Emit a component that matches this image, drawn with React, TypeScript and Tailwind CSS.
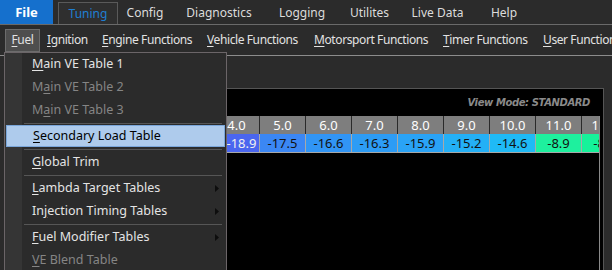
import React from "react";

type MenuItem = {
  pre: string;
  k: string;
  post: string;
  disabled?: boolean;
  sub?: boolean;
  active?: boolean;
};

const tabs = [
  { label: "Config", w: "w-[32px]", ml: "ml-[11px]" },
  { label: "Diagnostics", w: "w-[58px]", ml: "ml-[29px]" },
  { label: "Logging", w: "w-[42px]", ml: "ml-[33px]" },
  { label: "Utilites", w: "w-[35px]", ml: "ml-[29px]" },
  { label: "Live Data", w: "w-[45px]", ml: "ml-[28px]" },
  { label: "Help", w: "w-[22px]", ml: "ml-[33px]" },
];

const subMenus = [
  { k: "I", rest: "gnition", w: "w-[41px]", ml: "ml-[7px]" },
  { k: "E", rest: "ngine Functions", w: "w-[90px]", ml: "ml-[14px]" },
  { k: "V", rest: "ehicle Functions", w: "w-[92px]", ml: "ml-[15px]" },
  { k: "M", rest: "otorsport Functions", w: "w-[114px]", ml: "ml-[15px]" },
  { k: "T", rest: "imer Functions", w: "w-[86px]", ml: "ml-[15px]" },
  { k: "U", rest: "ser Functions", w: "w-[90px]", ml: "ml-[14px]" },
];

// rpm-ish columns, 4.0 sits half under the open menu
const columns = [
  { h: "4.0", v: "-18.9", bg: "bg-[#4a66ef]", light: true, shift: "pl-[10px]" },
  { h: "5.0", v: "-17.5", bg: "bg-[#3b87f4]" },
  { h: "6.0", v: "-16.6", bg: "bg-[#3195f5]" },
  { h: "7.0", v: "-16.3", bg: "bg-[#2d9cf5]" },
  { h: "8.0", v: "-15.9", bg: "bg-[#2aa3f6]" },
  { h: "9.0", v: "-15.2", bg: "bg-[#24b0f6]" },
  { h: "10.0", v: "-14.6", bg: "bg-[#1fbaf6]" },
  { h: "11.0", v: "-8.9", bg: "bg-[#1ef09e]" },
  { h: "12.0", v: "-8.1", bg: "bg-[#16f29a]" },
];

const Row = ({ item }: { item: MenuItem }) => {
  if (item.active) {
    return (
      <div className="mx-[1px] h-[22px] flex items-center pl-[26px] border border-[#7aa6da] bg-[#aecbec] text-black">
        {item.pre}
        <span className="underline underline-offset-2">{item.k}</span>
        {item.post}
      </div>
    );
  }
  return (
    <div
      className={`h-[23px] flex items-center pl-[27px] pr-[7px] ${
        item.disabled ? "text-[#858585]" : "text-[#e4e4e4]"
      }`}
    >
      <span className="flex-1">
        {item.pre}
        <span className="underline underline-offset-2">{item.k}</span>
        {item.post}
      </span>
      {item.sub && (
        <svg width="4" height="7" viewBox="0 0 4 7">
          <path d="M0 0 L4 3.5 L0 7 Z" fill="#0d0d0d" />
        </svg>
      )}
    </div>
  );
};

const Sep = ({ top = "pt-[1px]", bottom = "pb-[1px]" }) => (
  <div className={`${top} ${bottom} pl-[19px] pr-[4px]`}>
    <div className="h-px bg-[#565656]" />
  </div>
);

export default function App() {
  return (
    <div className="relative w-[612px] h-[270px] overflow-hidden bg-[#2b2b2b] font-['Noto_Sans',sans-serif] text-[12px] leading-none flex flex-col">
      {/* tab strip */}
      <div className="h-[24px] flex items-end shrink-0">
        <div className="w-[53px] h-[24px] shrink-0 bg-[#1570cd] text-white font-bold text-[13px] flex items-center justify-center">
          File
        </div>
        <div className="ml-[5px] w-[60px] h-[22px] shrink-0 border border-b-0 border-[#5a5a5a] bg-[#2f2f2f] text-[#1f7fd3] flex items-center justify-center">
          Tuning
        </div>
        {tabs.map((t) => (
          <div
            key={t.label}
            className={`${t.w} ${t.ml} h-[22px] shrink-0 flex items-center justify-center whitespace-nowrap text-[#dcdcdc]`}
          >
            {t.label}
          </div>
        ))}
      </div>
      <div className="h-px bg-[#6a6a6a] shrink-0" />

      {/* sub menu bar */}
      <div className="h-[30px] flex items-center shrink-0 text-[#e2e2e2] tracking-[-0.4px]">
        <div className="ml-[5px] w-[35px] h-[23px] shrink-0 bg-[#4e4e4e] border border-[#6c6c6c] flex items-center justify-center">
          <span>
            <span className="underline underline-offset-2">F</span>uel
          </span>
        </div>
        {subMenus.map((s) => (
          <div
            key={s.rest}
            className={`${s.w} ${s.ml} shrink-0 flex justify-start whitespace-nowrap`}
          >
            <span>
              <span className="underline underline-offset-2">{s.k}</span>
              {s.rest}
            </span>
          </div>
        ))}
      </div>
      <div className="h-px bg-[#8c8c8c] shrink-0" />

      {/* table area */}
      <div className="flex-1 flex flex-col pt-[32px]">
        <div className="ml-[12px] w-[592px] flex-1 bg-black border-t border-l border-r border-[#555] flex flex-col">
          <div className="h-[27px] flex items-center justify-end pr-[13px] font-['DejaVu_Sans',sans-serif] italic font-bold text-[10px] tracking-[-0.4px] text-[#8a8a8a]">
            View Mode: STANDARD
          </div>
          <div className="ml-[201px] w-[386px] flex-1 overflow-hidden border-r border-[#8a8a8a]">
            <div className="flex">
              {columns.map((c) => (
                <div key={c.h} className="w-[46px] shrink-0 flex flex-col">
                  <div className="h-[18px] bg-[#7e7e7e] border-r border-[#2a2a2a] text-white text-[13px] flex items-center justify-center">
                    {c.h}
                  </div>
                  <div
                    className={`h-[19px] ${c.bg} ${c.shift ?? ""} border-r border-b border-[#a8a8a8] text-[13px] flex items-center justify-center ${
                      c.light ? "text-[#f0f0f0]" : "text-[#111]"
                    }`}
                  >
                    {c.v}
                  </div>
                </div>
              ))}
            </div>
          </div>
        </div>
      </div>

      {/* dropdown menu */}
      <div className="absolute left-[4px] top-[52px] w-[223px] h-[230px] border border-[#6b6568] bg-[linear-gradient(to_right,#353535_17px,#2b2b2b_17px)] text-[12.5px]">
        <Row item={{ pre: "", k: "M", post: "ain VE Table 1" }} />
        <Row item={{ pre: "M", k: "a", post: "in VE Table 2", disabled: true }} />
        <Row item={{ pre: "M", k: "a", post: "in VE Table 3", disabled: true }} />
        <Sep />
        <Row item={{ pre: "", k: "S", post: "econdary Load Table", active: true }} />
        <Sep top="pt-[2px]" />
        <Row item={{ pre: "", k: "G", post: "lobal Trim" }} />
        <Sep />
        <Row item={{ pre: "", k: "L", post: "ambda Target Tables", sub: true }} />
        <Row item={{ pre: "In", k: "j", post: "ection Timing Tables", sub: true }} />
        <Sep />
        <Row item={{ pre: "", k: "F", post: "uel Modifier Tables", sub: true }} />
        <Row item={{ pre: "", k: "V", post: "E Blend Table", disabled: true }} />
      </div>
    </div>
  );
}
